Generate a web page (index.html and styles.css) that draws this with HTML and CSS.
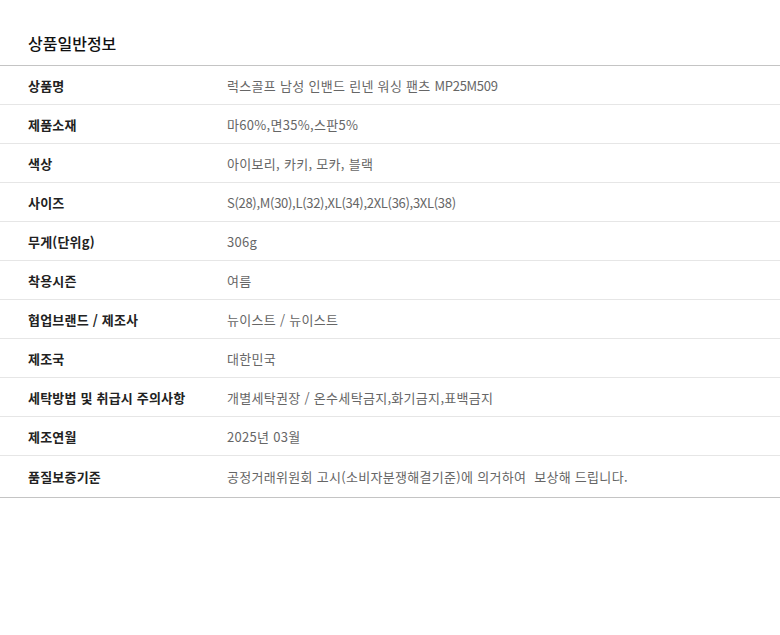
FILE: index.html
```html
<!DOCTYPE html>
<html lang="ko">
<head>
<meta charset="utf-8">
<title>상품일반정보</title>
<link rel="stylesheet" href="styles.css">
</head>
<body>
<section class="info">
  <h2 class="info-title">상품일반정보</h2>
  <div class="info-table">
    <div class="row"><div class="label">상품명</div><div class="value">럭스골프 남성 인밴드 린넨 워싱 팬츠 <span class="latin">MP25M509</span></div></div>
    <div class="row"><div class="label">제품소재</div><div class="value">마60%,면35%,스판5%</div></div>
    <div class="row"><div class="label">색상</div><div class="value">아이보리, 카키, 모카, 블랙</div></div>
    <div class="row"><div class="label">사이즈</div><div class="value latin">S(28),M(30),L(32),XL(34),2XL(36),3XL(38)</div></div>
    <div class="row"><div class="label">무게(단위g)</div><div class="value">306g</div></div>
    <div class="row"><div class="label">착용시즌</div><div class="value">여름</div></div>
    <div class="row"><div class="label">협업브랜드 / 제조사</div><div class="value">뉴이스트 / 뉴이스트</div></div>
    <div class="row"><div class="label">제조국</div><div class="value">대한민국</div></div>
    <div class="row"><div class="label">세탁방법 및 취급시 주의사항</div><div class="value">개별세탁권장 / 온수세탁금지,화기금지,표백금지</div></div>
    <div class="row"><div class="label">제조연월</div><div class="value">2025년 03월</div></div>
    <div class="row last"><div class="label">품질보증기준</div><div class="value">공정거래위원회 고시(소비자분쟁해결기준)에 의거하여&nbsp; 보상해 드립니다.</div></div>
  </div>
</section>
</body>
</html>
```

FILE: styles.css
```css
html, body {
  margin: 0;
  padding: 0;
  background: #ffffff;
}
body {
  font-family: "Noto Sans CJK KR", "Noto Sans", sans-serif;
  color: #222222;
}
.info {
  padding-top: 31px;
}
.info-title {
  margin: 0;
  padding: 0 0 0 28px;
  height: 34px;
  line-height: 24px;
  font-size: 16px;
  font-weight: 500;
  color: #111111;
  letter-spacing: 0;
}
.info-table {
  border-top: 1px solid #c4c4c4;
  border-bottom: 1px solid #c4c4c4;
}
.row {
  display: grid;
  grid-template-columns: 199px 1fr;
  align-items: center;
  height: 38px;
  padding-left: 28px;
  border-bottom: 1px solid #e6e6e6;
  font-size: 13px;
  letter-spacing: 0.3px;
}
.row.last {
  border-bottom: none;
  height: 41px;
}
.label {
  font-weight: 700;
  color: #222222;
  letter-spacing: 0.2px;
}
.value {
  color: #666666;
  white-space: pre;
}
.latin {
  letter-spacing: -0.3px;
}
```
